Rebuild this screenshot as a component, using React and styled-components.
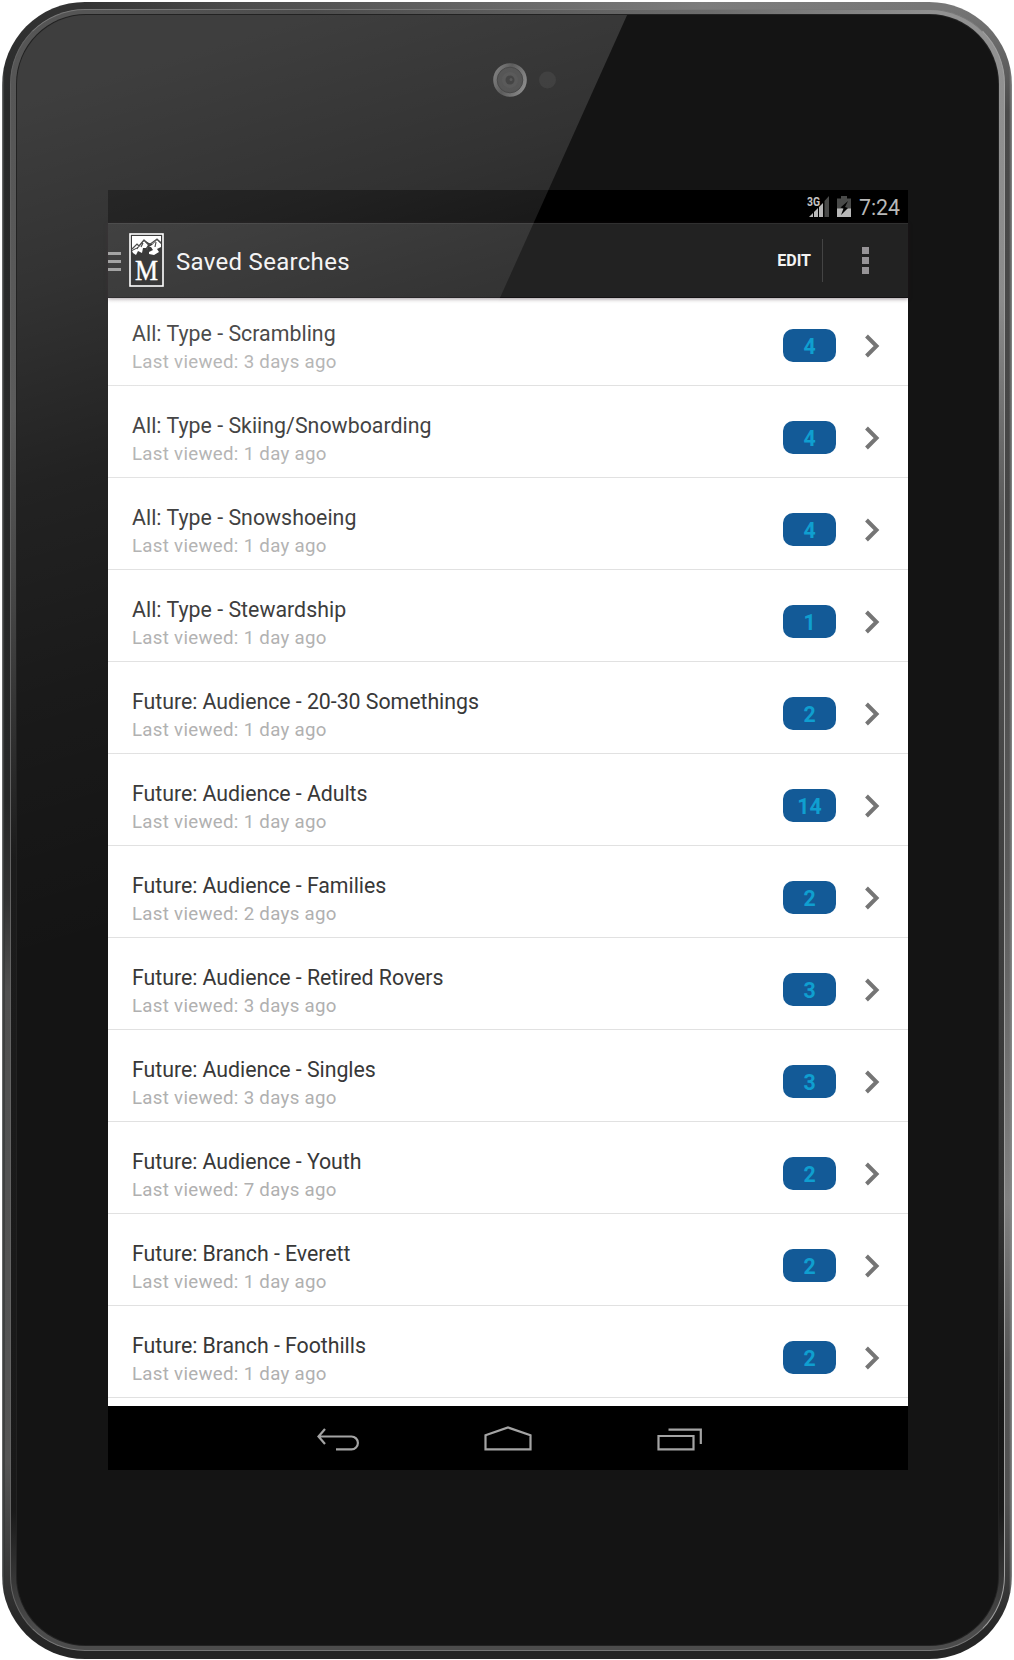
import React from 'react';
import styled, { createGlobalStyle } from 'styled-components';

const GlobalStyle = createGlobalStyle`
  * { box-sizing: border-box; }
  body { margin: 0; background: #fff; font-family: Roboto, "Liberation Sans", sans-serif; }
`;

const Stage = styled.main`
  width: 1014px;
  height: 1660px;
  padding: 2px 2px 1px 2px;
`;

const Shell = styled.div`
  height: 1657px;
  padding: 7px 7px 8px 8px;
  border-radius: 83px;
  background:
    linear-gradient(90deg, #777 0, #2c2f2f 2px, transparent 3px, transparent 1007px, #8a8a8a 1010px),
    linear-gradient(90deg, #333 80px, #4c4c4c 240px, #7c7c7c 700px, #777 920px) top / 100% 8px no-repeat,
    linear-gradient(180deg, #333 0, #292a2a 100px, #262727 800px, #333 900px, #505050 990px, #555 1460px, #3a3a3a 1560px, #252525 1630px) left / 50% 100% no-repeat,
    linear-gradient(180deg, #777 0, #6a6a6a 40px, #4a4a4a 110px, #454545 500px, #5a5a5a 870px, #808080 1200px, #555 1360px, #505050 1500px, #363636 1590px, #252525 1630px);
`;

const Ring = styled.div`
  height: 100%;
  padding: 5px 6px;
  border-radius: 75px;
  border: 1px solid #777;
  border-left-color: #626262;
  border-right-color: #a0a0a0;
  background:
    linear-gradient(90deg, #555 80px, #4c4c4c 300px, #6c6c6c 700px, #929292 930px) top / 100% 6px no-repeat,
    linear-gradient(180deg, #555 0, #5b5b5b 400px, #444 600px, #1c1c1c 850px, #191919 1500px, #4c4c4c 1620px) left / 50% 100% no-repeat,
    linear-gradient(180deg, #929292 0, #8b8b8b 290px, #5a5a5a 500px, #424242 800px, #333 1200px, #171717 1400px, #191919 1500px, #4c4c4c 1620px);
`;

const Glass = styled.div`
  position: relative;
  height: 100%;
  overflow: hidden;
  border-radius: 69px;
  background: #141414;
  box-shadow: 0 0 0 1px #222;
  padding: 175px 0 0 91px;
`;

const Camera = styled.svg`
  position: absolute;
  left: 463px;
  top: 37px;
`;

const Glare = styled.svg`
  position: absolute;
  z-index: 2;
  left: 0;
  top: 0;
  pointer-events: none;
`;

const Screen = styled.div`
  width: 800px;
  height: 1280px;
  display: flex;
  flex-direction: column;
  background: #fff;
`;

const StatusBar = styled.div`
  flex: 0 0 33px;
  display: flex;
  align-items: center;
  justify-content: flex-end;
  gap: 8px;
  padding-right: 8px;
  background: #000;
  color: #b9b9b9;
`;

const Signal = styled.svg`
  overflow: visible;
`;

const Clock = styled.span`
  font-size: 21.3px;
  line-height: 31px;
  padding-top: 2px;
`;

const ActionBar = styled.header`
  position: relative;
  z-index: 1;
  flex: 0 0 75px;
  display: flex;
  align-items: center;
  background: #222;
  border-top: 1px solid #303030;
  border-bottom: 1px solid #141214;
  box-shadow: 0 1px 4px rgba(40, 20, 30, .45);
`;

const Drawer = styled.div`
  width: 13px;
  display: grid;
  gap: 5px;
  margin-right: 8px;
  padding-top: 2px;
`;

const DrawerLine = styled.i`
  height: 3px;
  background: #969696;
`;

const LogoArt = styled.svg`
  margin-bottom: 2px;
`;

const Title = styled.h1`
  flex: 1;
  margin: 0 0 0 12px;
  font-size: 24px;
  font-weight: 400;
  color: #f3f3f3;
  letter-spacing: .3px;
  padding-top: 2px;
`;

const EditButton = styled.button`
  height: 43px;
  padding: 0 11px 0 0;
  border: 0;
  border-right: 1px solid #444;
  background: none;
  color: #f3f3f3;
  font: 700 16px/43px Roboto, sans-serif;
`;

const Overflow = styled.div`
  display: grid;
  gap: 3px;
  width: 7px;
  margin: 0 39px;
`;

const Dot = styled.i`
  height: 7px;
  background: #979497;
`;

const List = styled.ul`
  flex: 1;
  min-height: 0;
  overflow: hidden;
  margin: 0;
  padding: 0;
  list-style: none;
`;

const Row = styled.li`
  height: 92px;
  display: flex;
  align-items: center;
  border-bottom: 1px solid #e1e1e1;
  padding: 12px 28px 0 24px;

  &:first-child {
    margin-top: -4px;
  }
`;

const Copy = styled.div`
  flex: 1;
  padding-top: 4px;
`;

const Name = styled.div`
  font-size: 21.33px;
  line-height: 28px;
  color: #383838;
  white-space: nowrap;
  letter-spacing: ${({ $tight }) => ($tight ? '-.04px' : '.02px')};
`;

const Viewed = styled.div`
  font-size: 18.67px;
  line-height: 28px;
  color: #b0b0b0;
  white-space: nowrap;
  letter-spacing: .31px;
`;

const Count = styled.span`
  width: 53px;
  height: 33px;
  margin-right: 28px;
  border-radius: 10px;
  background: #135a97;
  color: #0f9fd0;
  font-size: 21.33px;
  font-weight: 700;
  line-height: 35px;
  text-align: center;
`;

const NavBar = styled.nav`
  flex: 0 0 64px;
  display: flex;
  align-items: center;
  gap: 124px;
  padding: 4px 0 0 208px;
  background: #000;
`;

const searches = [
  ['All: Type - Scrambling', '3 days', 4],
  ['All: Type - Skiing/Snowboarding', '1 day', 4],
  ['All: Type - Snowshoeing', '1 day', 4],
  ['All: Type - Stewardship', '1 day', 1],
  ['Future: Audience - 20-30 Somethings', '1 day', 2],
  ['Future: Audience - Adults', '1 day', 14],
  ['Future: Audience - Families', '2 days', 2],
  ['Future: Audience - Retired Rovers', '3 days', 3],
  ['Future: Audience - Singles', '3 days', 3],
  ['Future: Audience - Youth', '7 days', 2],
  ['Future: Branch - Everett', '1 day', 2],
  ['Future: Branch - Foothills', '1 day', 2],
];

const SignalIcon = () => (
  <Signal width="22" height="22" viewBox="0 0 22 22">
    <path d="M2 21 6 17V21ZM7 16 11 12V21H7ZM12 11 16 7V21H12Z" fill="#b9b9b9" />
    <path d="M17.500 5 22 0V21H17.500Z" fill="#494a49" />
    <text x="0" y="10" fontFamily="Roboto, sans-serif" fontSize="12.500" fontWeight="700" fill="#c4c4c4" stroke="#000" strokeWidth="1" paintOrder="stroke" textLength="13" lengthAdjust="spacingAndGlyphs">3G</text>
  </Signal>
);

const BatteryIcon = () => (
  <svg width="14" height="22" viewBox="0 0 14 22">
    <path d="M4 0H10V2.500H14V21H0V2.500H4Z" fill="#494a49" />
    <path d="M0 12.500H14V21H0Z" fill="#b9b9b9" />
    <path d="M11 5 3.500 11.500 6.500 12.500 4 19 11 12 8 11Z" fill="#050505" />
  </svg>
);

const Logo = () => (
  <LogoArt width="35" height="54" viewBox="0 0 35 54">
    <rect x="1" y="1" width="33" height="52" fill="#1d1d1d" stroke="#fff" strokeWidth="1.600" />
    <path d="M3 3H32V9L28 6 23 11 20 10 15 7 9 14 3 17Z" fill="#fff" />
    <path d="M3 18 9 15 13 10 15 8 19 12 17 15 14 15 13 20 9 18 7 22 4 20ZM20 14 23 12 28 7 32 11V14L28 16 30 19 25 22 20 21 20 19 24 17 22 14Z" fill="#fff" />
    <path d="M3 16 8 11 10 13 15 7 20 12 28 6 32 10M9 14 8 16M14 10 12 14M19 13 18 17M27 9 26 14" fill="none" stroke="#333" strokeWidth="1.200" />
    <text x="17.500" y="46.500" textAnchor="middle" fontFamily="Liberation Serif, serif" fontSize="30" fill="#fff" stroke="#fff" strokeWidth=".4" textLength="23" lengthAdjust="spacingAndGlyphs">M</text>
  </LogoArt>
);

const Chevron = () => (
  <svg width="16" height="24" viewBox="0 0 16 24">
    <path d="M2.500 2 12.500 12 2.500 22" fill="none" stroke="#757575" strokeWidth="4" />
  </svg>
);

const navStroke = { fill: 'none', stroke: '#a4a4a4', strokeWidth: 2.2 };

const BackIcon = () => (
  <svg width="44" height="28" viewBox="0 0 44 28">
    <path d="M9 3 2.500 10.500 9 18M3 10.500H35.500A6.300 6.300 0 0 1 35.500 23.300H20" {...navStroke} />
  </svg>
);

const HomeIcon = () => (
  <svg width="48" height="28" viewBox="0 0 48 28">
    <path d="M1.500 23.300V9.300L24 1.500 46.500 9.300V23.300Z" {...navStroke} />
  </svg>
);

const RecentIcon = () => (
  <svg width="46" height="28" viewBox="0 0 46 28">
    <path d="M2.500 10H37.500V23.300H2.500ZM12.500 3.700H44.800V18" {...navStroke} />
  </svg>
);

export default function App() {
  return (
    <>
      <GlobalStyle />
      <Stage>
        <Shell>
          <Ring>
            <Glass>
              <Camera width="90" height="60" viewBox="0 0 90 60">
                <defs>
                  <linearGradient id="lens" x1="0" y1="0.300" x2="1" y2="0.700">
                    <stop offset="0" stopColor="#6b6b6b" />
                    <stop offset=".4" stopColor="#404040" />
                    <stop offset="1" stopColor="#7c7c7c" />
                  </linearGradient>
                </defs>
                <circle cx="30" cy="28" r="16.800" fill="url(#lens)" />
                <circle cx="30" cy="28" r="12.800" fill="#393939" stroke="#2c2c2c" strokeWidth="1" />
                <circle cx="30" cy="28" r="8" fill="#3e3e3e" />
                <circle cx="30" cy="28" r="4.500" fill="#252525" />
                <circle cx="31" cy="27.500" r="1.500" fill="#3d3d3d" />
                <circle cx="67.500" cy="28" r="8.500" fill="#212121" />
              </Camera>
              <Screen>
                <StatusBar>
                  <SignalIcon />
                  <BatteryIcon />
                  <Clock>7:24</Clock>
                </StatusBar>
                <ActionBar>
                  <Drawer>
                    <DrawerLine />
                    <DrawerLine />
                    <DrawerLine />
                  </Drawer>
                  <Logo />
                  <Title>Saved Searches</Title>
                  <EditButton>EDIT</EditButton>
                  <Overflow>
                    <Dot />
                    <Dot />
                    <Dot />
                  </Overflow>
                </ActionBar>
                <List>
                  {searches.map(([name, age, count]) => (
                    <Row key={name}>
                      <Copy>
                        <Name $tight={name.startsWith('Future')}>{name}</Name>
                        <Viewed>Last viewed: {age} ago</Viewed>
                      </Copy>
                      <Count>{count}</Count>
                      <Chevron />
                    </Row>
                  ))}
                </List>
                <NavBar>
                  <BackIcon />
                  <HomeIcon />
                  <RecentIcon />
                </NavBar>
              </Screen>
              <Glare width="982" height="1630" viewBox="17 15 982 1630">
                <defs>
                  <linearGradient id="shine" gradientUnits="userSpaceOnUse" x1="17" y1="100" x2="257" y2="900">
                    <stop offset="0" stopColor="#fff" stopOpacity=".18" />
                    <stop offset=".22" stopColor="#fff" stopOpacity=".13" />
                    <stop offset=".45" stopColor="#fff" stopOpacity=".06" />
                    <stop offset=".7" stopColor="#fff" stopOpacity=".025" />
                    <stop offset="1" stopColor="#fff" stopOpacity="0" />
                  </linearGradient>
                </defs>
                <path d="M17 13H628L108 1170 17 1370Z" fill="url(#shine)" />
              </Glare>
            </Glass>
          </Ring>
        </Shell>
      </Stage>
    </>
  );
}
